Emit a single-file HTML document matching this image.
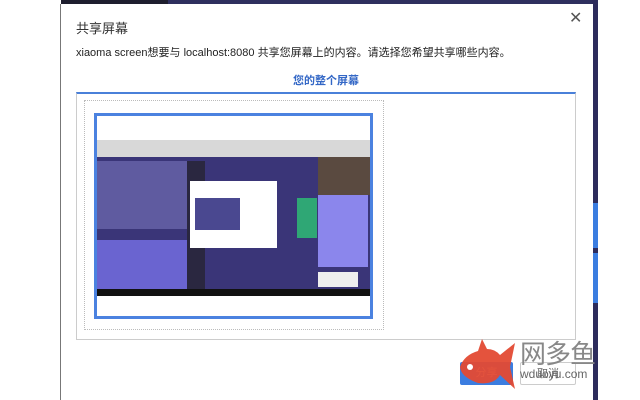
<!DOCTYPE html>
<html><head><meta charset="utf-8"><style>
*{margin:0;padding:0;box-sizing:border-box}
body{width:640px;height:400px;background:#fff;position:relative;overflow:hidden;font-family:"Liberation Sans","Noto Sans CJK SC",sans-serif}
.a{position:absolute}
</style></head><body>
<div class="a" style="left:61px;top:0;width:537px;height:4px;background:#2e2f5e"></div>
<div class="a" style="left:61px;top:0;width:107px;height:4px;background:#1e1e2e"></div>
<div class="a" style="left:592px;top:0;width:6px;height:400px;background:#2d2c5c"></div>
<div class="a" style="left:592px;top:203px;width:6px;height:45px;background:#3b7de0"></div>
<div class="a" style="left:592px;top:253px;width:6px;height:50px;background:#3b7de0"></div>
<div class="a" style="left:60px;top:4px;width:533px;height:396px;background:#fff;border-left:1px solid #777"></div>
<div class="a" style="left:76px;top:18px;font-size:13px;color:#333">共享屏幕</div>
<div class="a" style="left:569px;top:8px;font-size:16px;color:#555">✕</div>
<div class="a" style="left:76px;top:44px;font-size:11px;color:#222;white-space:nowrap">xiaoma screen想要与 localhost:8080 共享您屏幕上的内容。请选择您希望共享哪些内容。</div>
<div class="a" style="left:76px;top:72px;width:500px;text-align:center;font-size:11px;font-weight:bold;color:#3367c6">您的整个屏幕</div>
<div class="a" style="left:76px;top:92px;width:500px;height:248px;border:1px solid #ccc;border-top:2px solid #4a80d9"></div>
<div class="a" style="left:84px;top:100px;width:300px;height:230px;border:1px dotted #bbb"></div>
<div class="a" style="left:94px;top:113px;width:279px;height:206px;border:3px solid #4b82e0;background:#fff"></div>
<div class="a" style="left:97px;top:140px;width:273px;height:17px;background:#d8d8d8"></div>
<div class="a" style="left:97px;top:157px;width:273px;height:132px;background:#3a3578"></div>
<div class="a" style="left:97px;top:161px;width:90px;height:68px;background:#5f5ba0"></div>
<div class="a" style="left:97px;top:240px;width:90px;height:49px;background:#6a64d0"></div>
<div class="a" style="left:187px;top:161px;width:18px;height:128px;background:#2a2740"></div>
<div class="a" style="left:318px;top:157px;width:52px;height:38px;background:#5a4a40"></div>
<div class="a" style="left:318px;top:195px;width:50px;height:72px;background:#8b86ec"></div>
<div class="a" style="left:318px;top:272px;width:40px;height:15px;background:#eee"></div>
<div class="a" style="left:297px;top:198px;width:20px;height:40px;background:#2fa775"></div>
<div class="a" style="left:190px;top:181px;width:87px;height:67px;background:#fff"></div>
<div class="a" style="left:195px;top:198px;width:45px;height:32px;background:#4a4890"></div>
<div class="a" style="left:97px;top:289px;width:273px;height:7px;background:#111"></div>
<div class="a" style="left:460px;top:362px;width:53px;height:23px;background:#3b7de0;border-radius:2px;color:#fff;font-size:11px;text-align:center;line-height:23px">分享</div>
<div class="a" style="left:520px;top:362px;width:56px;height:23px;border:1px solid #ccc;border-radius:2px;color:#666;font-size:11px;text-align:center;line-height:22px">取消</div>
<svg class="a" style="left:458px;top:333px" width="60" height="58"><path d="M42 22 L57 10 L52 34 L57 56 L42 42 Q36 52 20 50 Q3 44 2 34 Q6 22 20 18 L24 6 L29 16 Q37 16 42 22Z" fill="#e34a33" opacity=".95"/><circle cx="12" cy="34" r="3" fill="#fff"/></svg>
<div class="a" style="left:520px;top:334px;font-size:26px;color:#888;letter-spacing:-1px">网多鱼</div>
<div class="a" style="left:520px;top:367px;font-size:12px;color:#666">wduoyu.com</div>
</body></html>
